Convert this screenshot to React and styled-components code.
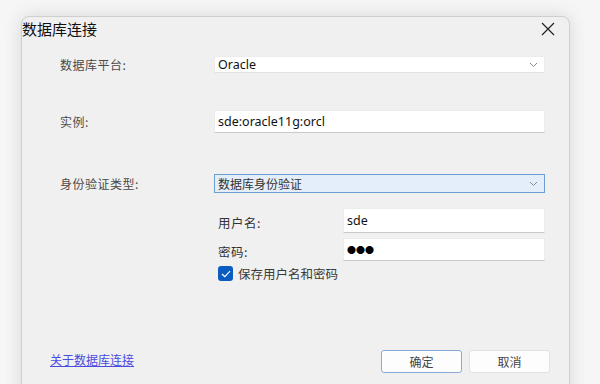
import React, { useState } from 'react'
import styled, { createGlobalStyle } from 'styled-components'

const Global = createGlobalStyle`
  html, body { margin: 0; padding: 0; background: #f6f6f6; overflow: hidden; }
  body { font-family: "Noto Sans", "Noto Sans CJK SC", sans-serif; }
`

const Page = styled.div`
  width: 600px;
  height: 384px;
  overflow: hidden;
  padding: 16px 0 0 21px;
  box-sizing: border-box;
`

const Dialog = styled.div`
  width: 549px;
  height: 400px;
  box-sizing: border-box;
  background: #f0f0f0;
  border: 1px solid #cfcfcf;
  border-radius: 8px;
  box-shadow: 0 0 18px rgba(0, 0, 0, 0.13);
  display: flex;
  flex-direction: column;
`

const TitleBar = styled.div`
  height: 39px;
  display: flex;
  align-items: flex-start;
  justify-content: space-between;
  padding: 1px 12px 0 0;
  box-sizing: border-box;
`

const Title = styled.div`
  font-family: "Noto Sans CJK SC", sans-serif;
  font-size: 15px;
  line-height: 22px;
  color: #111;
`

const Close = styled.div`
  width: 16px;
  height: 16px;
  margin-top: 4px;
  display: flex;
`

const Form = styled.div`
  padding: 0 24px 0 38px;
  display: flex;
  flex-direction: column;
`

const Row = styled.div`
  display: grid;
  grid-template-columns: 154px 1fr;
  align-items: center;
  margin-top: ${p => p.top || 0}px;
`

const Label = styled.div`
  font-family: "Noto Sans CJK SC", sans-serif;
  font-size: 12px;
  color: #4a4a4a;
  letter-spacing: 0.5px;
`

const Field = styled.div`
  height: ${p => p.h}px;
  box-sizing: border-box;
  display: flex;
  align-items: center;
  justify-content: space-between;
  padding: 0 6px 0 3px;
  background: ${p => (p.focus ? '#e4eefa' : '#fff')};
  border: 1px solid ${p => (p.focus ? '#6c9fd4' : '#ececec')};
  border-bottom-color: ${p => (p.focus ? '#6c9fd4' : p.select ? '#e2e2e2' : '#c9c9c9')};
  font-size: 12.5px;
  color: #111;
`

const CjkValue = styled.span`
  font-family: "Noto Sans CJK SC", sans-serif;
  font-size: 12px;
  color: #333;
`

const Sub = styled.div`
  margin-left: 154px;
  padding-left: 4px;
  display: flex;
  flex-direction: column;
`

const SubRow = styled.div`
  display: grid;
  grid-template-columns: 125px 1fr;
  align-items: center;
  margin-top: ${p => p.top || 0}px;
`

const SubLabel = styled(Label)`
  color: #333;
  font-size: 12.5px;
  padding-top: ${p => p.drop || 0}px;
`

const Dots = styled.span`
  font-size: 9px;
  line-height: 1;
  color: #000;
`

const CheckRow = styled.label`
  display: flex;
  align-items: center;
  gap: 5px;
  margin-top: 3px;
  cursor: default;
`

const Box = styled.span`
  width: 15px;
  height: 15px;
  border-radius: 3px;
  background: #0b5cbf;
  display: flex;
  align-items: center;
  justify-content: center;
`

const CheckText = styled.span`
  font-family: "Noto Sans CJK SC", sans-serif;
  font-size: 12.5px;
  color: #3a3a3a;
`

const Footer = styled.div`
  margin-top: 67px;
  padding: 0 19px 0 28px;
  display: flex;
  align-items: center;
  justify-content: space-between;
`

const Link = styled.a`
  font-family: "Noto Sans CJK SC", sans-serif;
  font-size: 12px;
  color: #4b4be0;
  text-decoration: underline;
  margin-top: -5px;
`

const Buttons = styled.div`
  display: flex;
  gap: 7px;
`

const Button = styled.button`
  width: 81px;
  height: 23px;
  background: #fdfdfd;
  border: 1px solid ${p => (p.primary ? '#86acd6' : '#e1e1e1')};
  border-radius: 3px;
  font-family: "Noto Sans CJK SC", sans-serif;
  font-size: 12px;
  color: #444;
  padding: 0;
`

const Chevron = () => (
  <svg width="9" height="6" viewBox="0 0 9 6">
    <path d="M1 1 L4.5 4.5 L8 1" fill="none" stroke="#8a8a8a" strokeWidth="1" />
  </svg>
)

const App = () => {
  const [save, setSave] = useState(true)
  return (
    <Page>
      <Global />
      <Dialog>
        <TitleBar>
          <Title>数据库连接</Title>
          <Close>
            <svg width="14" height="14" viewBox="0 0 14 14">
              <path d="M1 1 L13 13 M13 1 L1 13" stroke="#222" strokeWidth="1.2" />
            </svg>
          </Close>
        </TitleBar>
        <Form>
          <Row>
            <Label>数据库平台:</Label>
            <Field h={17} select>
              <span>Oracle</span>
              <Chevron />
            </Field>
          </Row>
          <Row top={37}>
            <Label>实例:</Label>
            <Field h={23}>
              <span>sde:oracle11g:orcl</span>
            </Field>
          </Row>
          <Row top={41}>
            <Label>身份验证类型:</Label>
            <Field h={19} focus>
              <CjkValue>数据库身份验证</CjkValue>
              <Chevron />
            </Field>
          </Row>
          <Sub>
            <SubRow top={15}>
              <SubLabel drop={4}>用户名:</SubLabel>
              <Field h={25}>
                <span>sde</span>
              </Field>
            </SubRow>
            <SubRow top={5}>
              <SubLabel drop={4}>密码:</SubLabel>
              <Field h={23}>
                <Dots>●●●</Dots>
              </Field>
            </SubRow>
            <CheckRow onClick={() => setSave(!save)}>
              <Box>
                {save && (
                  <svg width="10" height="8" viewBox="0 0 10 8">
                    <path d="M1 4 L3.8 6.6 L9 1.2" fill="none" stroke="#fff" strokeWidth="1.2" />
                  </svg>
                )}
              </Box>
              <CheckText>保存用户名和密码</CheckText>
            </CheckRow>
          </Sub>
        </Form>
        <Footer>
          <Link href="#">关于数据库连接</Link>
          <Buttons>
            <Button primary>确定</Button>
            <Button>取消</Button>
          </Buttons>
        </Footer>
      </Dialog>
    </Page>
  )
}

export default App
